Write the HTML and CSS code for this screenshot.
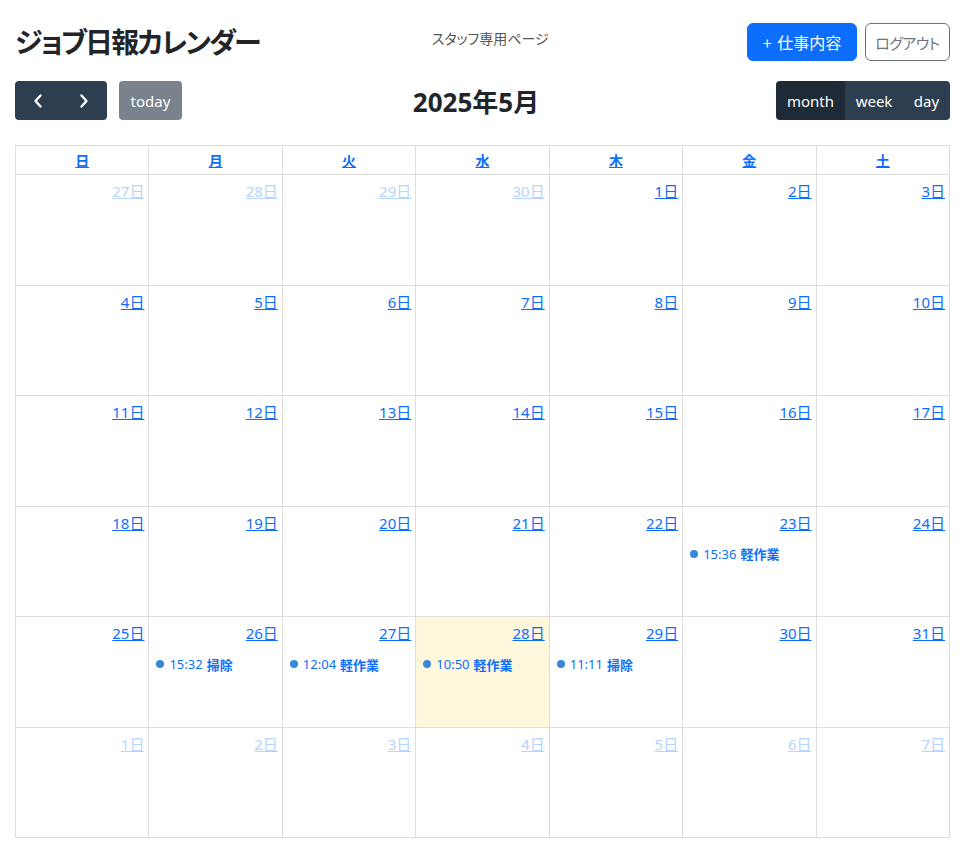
FILE: index.html
```html
<!DOCTYPE html>
<html lang="ja">
<head>
<meta charset="utf-8">
<title>ジョブ日報カレンダー</title>
<link rel="stylesheet" href="styles.css">
</head>
<body>
<div class="page">
  <header class="top">
    <h1 class="app-title">ジョブ日報カレンダー</h1>
    <p class="subtitle">スタッフ専用ページ</p>
    <div class="top-actions">
      <button class="btn btn-primary">+ 仕事内容</button>
      <button class="btn btn-outline">ログアウト</button>
    </div>
  </header>

  <div class="toolbar">
    <div class="tb-chunk">
      <div class="btn-group">
        <button class="fc-btn icon-btn" aria-label="prev">
          <svg width="12" height="16" viewBox="0 0 12 16"><path d="M8.5 2.5 L3.5 8 L8.5 13.5" fill="none" stroke="#fff" stroke-width="2.4" stroke-linecap="round" stroke-linejoin="round"/></svg>
        </button>
        <button class="fc-btn icon-btn" aria-label="next">
          <svg width="12" height="16" viewBox="0 0 12 16"><path d="M3.5 2.5 L8.5 8 L3.5 13.5" fill="none" stroke="#fff" stroke-width="2.4" stroke-linecap="round" stroke-linejoin="round"/></svg>
        </button>
      </div>
      <button class="fc-btn today-btn">today</button>
    </div>
    <h2 class="cal-title">2025年5月</h2>
    <div class="btn-group">
      <button class="fc-btn view-btn active w-month">month</button>
      <button class="fc-btn view-btn w-week">week</button>
      <button class="fc-btn view-btn w-day">day</button>
    </div>
  </div>

  <div class="grid">
    <div class="dow"><a>日</a></div>
    <div class="dow"><a>月</a></div>
    <div class="dow"><a>火</a></div>
    <div class="dow"><a>水</a></div>
    <div class="dow"><a>木</a></div>
    <div class="dow"><a>金</a></div>
    <div class="dow"><a>土</a></div>

    <div class="day other"><a class="num">27日</a></div>
    <div class="day other"><a class="num">28日</a></div>
    <div class="day other"><a class="num">29日</a></div>
    <div class="day other"><a class="num">30日</a></div>
    <div class="day"><a class="num">1日</a></div>
    <div class="day"><a class="num">2日</a></div>
    <div class="day"><a class="num">3日</a></div>

    <div class="day"><a class="num">4日</a></div>
    <div class="day"><a class="num">5日</a></div>
    <div class="day"><a class="num">6日</a></div>
    <div class="day"><a class="num">7日</a></div>
    <div class="day"><a class="num">8日</a></div>
    <div class="day"><a class="num">9日</a></div>
    <div class="day"><a class="num">10日</a></div>

    <div class="day"><a class="num">11日</a></div>
    <div class="day"><a class="num">12日</a></div>
    <div class="day"><a class="num">13日</a></div>
    <div class="day"><a class="num">14日</a></div>
    <div class="day"><a class="num">15日</a></div>
    <div class="day"><a class="num">16日</a></div>
    <div class="day"><a class="num">17日</a></div>

    <div class="day"><a class="num">18日</a></div>
    <div class="day"><a class="num">19日</a></div>
    <div class="day"><a class="num">20日</a></div>
    <div class="day"><a class="num">21日</a></div>
    <div class="day"><a class="num">22日</a></div>
    <div class="day"><a class="num">23日</a><div class="event"><span class="dot"></span><span class="time">15:36</span><b class="ev-title">軽作業</b></div></div>
    <div class="day"><a class="num">24日</a></div>

    <div class="day"><a class="num">25日</a></div>
    <div class="day"><a class="num">26日</a><div class="event"><span class="dot"></span><span class="time">15:32</span><b class="ev-title">掃除</b></div></div>
    <div class="day"><a class="num">27日</a><div class="event"><span class="dot"></span><span class="time">12:04</span><b class="ev-title">軽作業</b></div></div>
    <div class="day today"><a class="num">28日</a><div class="event"><span class="dot"></span><span class="time">10:50</span><b class="ev-title">軽作業</b></div></div>
    <div class="day"><a class="num">29日</a><div class="event"><span class="dot"></span><span class="time">11:11</span><b class="ev-title">掃除</b></div></div>
    <div class="day"><a class="num">30日</a></div>
    <div class="day"><a class="num">31日</a></div>

    <div class="day other"><a class="num">1日</a></div>
    <div class="day other"><a class="num">2日</a></div>
    <div class="day other"><a class="num">3日</a></div>
    <div class="day other"><a class="num">4日</a></div>
    <div class="day other"><a class="num">5日</a></div>
    <div class="day other"><a class="num">6日</a></div>
    <div class="day other"><a class="num">7日</a></div>
  </div>
</div>
</body>
</html>
```

FILE: styles.css
```css
* { box-sizing: border-box; }
html, body { margin: 0; padding: 0; background: #fff; }
body {
  font-family: "Noto Sans", "Noto Sans CJK JP", sans-serif;
  color: #212529;
  font-size: 16px;
}
.page {
  padding: 23px 13px 0 15px;
}
.top {
  display: flex;
  align-items: center;
  justify-content: space-between;
  height: 38px;
}
.app-title {
  margin: 0;
  font-family: "Noto Sans CJK JP", sans-serif;
  font-feature-settings: "palt";
  font-size: 28px;
  font-weight: 700;
  line-height: 1.2;
  color: #212529;
  letter-spacing: -1.9px;
}
.subtitle {
  margin: 0 26px 8px 0;
  font-family: "Noto Sans CJK JP", sans-serif;
  font-feature-settings: "palt";
  font-size: 14px;
  color: #555;
}
.top-actions {
  display: flex;
  gap: 8px;
}
.btn {
  height: 38px;
  border-radius: 6px;
  font-family: "Noto Sans CJK JP", sans-serif;
  font-size: 16px;
  line-height: 1;
  padding: 0;
  cursor: pointer;
}
.btn-primary {
  width: 110px;
  background: #0d6efd;
  border: 1px solid #0d6efd;
  color: #fff;
  word-spacing: 2px;
}
.btn-outline {
  width: 85px;
  background: #fff;
  border: 1px solid #6c757d;
  color: #6c757d;
  font-feature-settings: "palt";
  font-size: 15px;
  letter-spacing: -0.5px;
}

.toolbar {
  margin-top: 20px;
  display: flex;
  align-items: center;
  justify-content: space-between;
  height: 39px;
}
.tb-chunk {
  display: flex;
  align-items: center;
  gap: 12px;
}
.btn-group {
  display: flex;
  border-radius: 4px;
  overflow: hidden;
}
.fc-btn {
  height: 39px;
  border: none;
  background: #2c3e50;
  color: #fff;
  font-family: "Noto Sans", sans-serif;
  font-size: 15px;
  padding: 0;
  display: flex;
  align-items: center;
  justify-content: center;
}
.icon-btn { width: 46px; }
.today-btn {
  width: 63px;
  border-radius: 4px;
  background: #7a828e;
  color: #fff;
}
.view-btn.active { background: #1e2b37; }
.w-month { width: 69px; }
.w-week { width: 58px; }
.w-day { width: 47px; }
.cal-title {
  margin: 0 0 0 -6px;
  font-family: "Noto Sans", "Noto Sans CJK JP", sans-serif;
  font-size: 26px;
  font-weight: 700;
  color: #212529;
}

.grid {
  margin-top: 25px;
  display: grid;
  grid-template-columns: repeat(7, 1fr);
  grid-template-rows: 29px repeat(6, 110.5px);
  border-top: 1px solid #ddd;
  border-left: 1px solid #ddd;
}
.dow, .day {
  border-right: 1px solid #ddd;
  border-bottom: 1px solid #ddd;
}
.dow {
  display: flex;
  align-items: center;
  justify-content: center;
}
.dow a {
  font-family: "Noto Sans CJK JP", sans-serif;
  font-size: 14px;
  font-weight: 700;
  color: #0d6efd;
  text-decoration: underline;
}
.day {
  display: flex;
  flex-direction: column;
  padding: 5px 4px 0 4px;
}
.num {
  align-self: flex-end;
  font-family: "Noto Sans", "Noto Sans CJK JP", sans-serif;
  font-size: 15px;
  line-height: 23px;
  color: #0d6efd;
  text-decoration: underline;
}
.other .num { color: #b6d4fe; }
.today { background: #fff8dc; }
.event {
  margin-top: 9px;
  display: flex;
  align-items: center;
  height: 20px;
  font-family: "Noto Sans", "Noto Sans CJK JP", sans-serif;
  font-size: 13px;
  color: #0d6efd;
  white-space: nowrap;
}
.dot {
  width: 8px;
  height: 8px;
  border-radius: 50%;
  background: #3788d8;
  margin: 0 5px 0 3px;
  flex: none;
}
.time { margin-right: 4px; }
.ev-title {
  font-family: "Noto Sans CJK JP", sans-serif;
  font-weight: 700;
}
```
